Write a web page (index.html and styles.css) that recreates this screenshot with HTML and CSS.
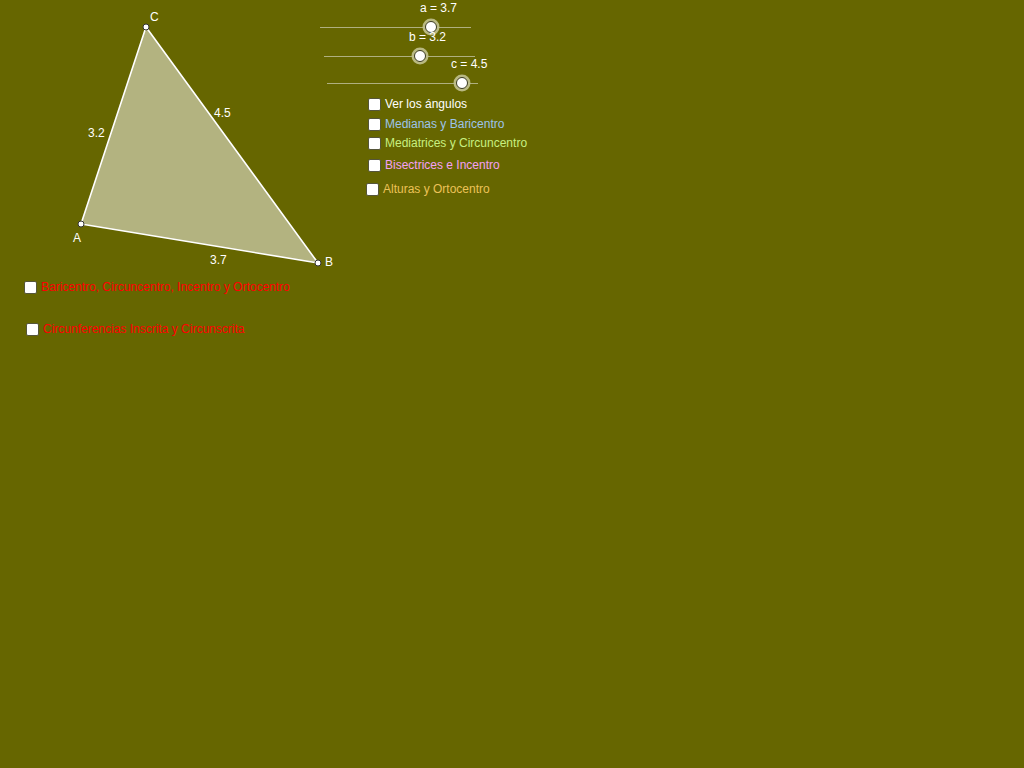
FILE: index.html
```html
<!DOCTYPE html>
<html lang="es">
<head>
<meta charset="utf-8">
<title>Triángulo</title>
<link rel="stylesheet" href="styles.css">
</head>
<body>
<div class="canvas">
  <svg class="geo" width="1024" height="768" viewBox="0 0 1024 768">
    <polygon class="tri" points="81,224 318,263 146,27"/>
    <line class="seg" x1="81" y1="224" x2="318" y2="263"/>
    <line class="seg" x1="318" y1="263" x2="146" y2="27"/>
    <line class="seg" x1="146" y1="27" x2="81" y2="224"/>
    <circle class="pt" cx="81" cy="224" r="3"/>
    <circle class="pt" cx="318" cy="263" r="3"/>
    <circle class="pt" cx="146" cy="27" r="3"/>
    <text class="lbl" x="73" y="242">A</text>
    <text class="lbl" x="325" y="266">B</text>
    <text class="lbl" x="150" y="21">C</text>
    <text class="lbl" x="88" y="137">3.2</text>
    <text class="lbl" x="214" y="117">4.5</text>
    <text class="lbl" x="210" y="264">3.7</text>

    <line class="track" x1="320" y1="27.5" x2="471" y2="27.5"/>
    <circle class="halo" cx="431" cy="27" r="8.5"/>
    <circle class="knob" cx="431" cy="27" r="5.5"/>
    <text class="lbl" x="420" y="12">a = 3.7</text>

    <line class="track" x1="324" y1="56.5" x2="475" y2="56.5"/>
    <circle class="halo" cx="420" cy="56" r="8.5"/>
    <circle class="knob" cx="420" cy="56" r="5.5"/>
    <text class="lbl" x="409" y="41">b = 3.2</text>

    <line class="track" x1="327" y1="83.5" x2="478" y2="83.5"/>
    <circle class="halo" cx="462" cy="83" r="8.5"/>
    <circle class="knob" cx="462" cy="83" r="5.5"/>
    <text class="lbl" x="451" y="68">c = 4.5</text>
  </svg>

  <label class="cb cb-angles"><span class="box"></span><span class="txt white">Ver los ángulos</span></label>
  <label class="cb cb-med"><span class="box"></span><span class="txt blue">Medianas y Baricentro</span></label>
  <label class="cb cb-mediat"><span class="box"></span><span class="txt green">Mediatrices y Circuncentro</span></label>
  <label class="cb cb-bis"><span class="box"></span><span class="txt pink">Bisectrices e Incentro</span></label>
  <label class="cb cb-alt"><span class="box"></span><span class="txt orange">Alturas y Ortocentro</span></label>
  <label class="cb cb-all"><span class="box"></span><span class="txt red">Baricentro, Circuncentro, Incentro y Ortocentro</span></label>
  <label class="cb cb-circ"><span class="box"></span><span class="txt red">Circunferencias Inscrita y Circunscrita</span></label>
</div>
</body>
</html>
```
FILE: styles.css
```css
html, body {
  margin: 0;
  padding: 0;
  background: #666600;
  overflow: hidden;
}
.canvas {
  position: relative;
  width: 1024px;
  height: 768px;
  background: #666600;
  font-family: "Liberation Sans", Arial, sans-serif;
  font-size: 12px;
}
.geo {
  position: absolute;
  left: 0;
  top: 0;
  display: block;
}
.tri {
  fill: #b3b380;
  stroke: none;
}
.seg {
  stroke: #ffffff;
  stroke-width: 1.6;
  stroke-linecap: round;
}
.pt {
  fill: #ffffff;
  stroke: #333333;
  stroke-width: 1;
}
.lbl {
  fill: #ffffff;
  font-family: "Liberation Sans", Arial, sans-serif;
  font-size: 12px;
}
.track {
  stroke: #b0b080;
  stroke-width: 1;
}
.halo {
  fill: #c2c290;
  opacity: 0.9;
}
.knob {
  fill: #ffffff;
  stroke: #3a3a20;
  stroke-width: 1;
}
.cb {
  position: absolute;
  display: flex;
  align-items: center;
  gap: 4px;
  height: 14px;
  line-height: 14px;
  white-space: nowrap;
}
.box {
  width: 11px;
  height: 11px;
  background: #ffffff;
  border: 1px solid #55553a;
  border-radius: 2px;
  box-sizing: content-box;
}
.txt { font-size: 12px; }
.white { color: #ffffff; }
.blue { color: #9cc4ea; }
.green { color: #c8f080; }
.pink { color: #f4a0f4; }
.orange { color: #ecc258; }
.red { color: #ff0000; }

.cb-angles { left: 368px; top: 97px; }
.cb-med { left: 368px; top: 117px; }
.cb-mediat { left: 368px; top: 136px; }
.cb-bis { left: 368px; top: 158px; }
.cb-alt { left: 366px; top: 182px; }
.cb-all { left: 24px; top: 280px; }
.cb-circ { left: 26px; top: 322px; }
```
